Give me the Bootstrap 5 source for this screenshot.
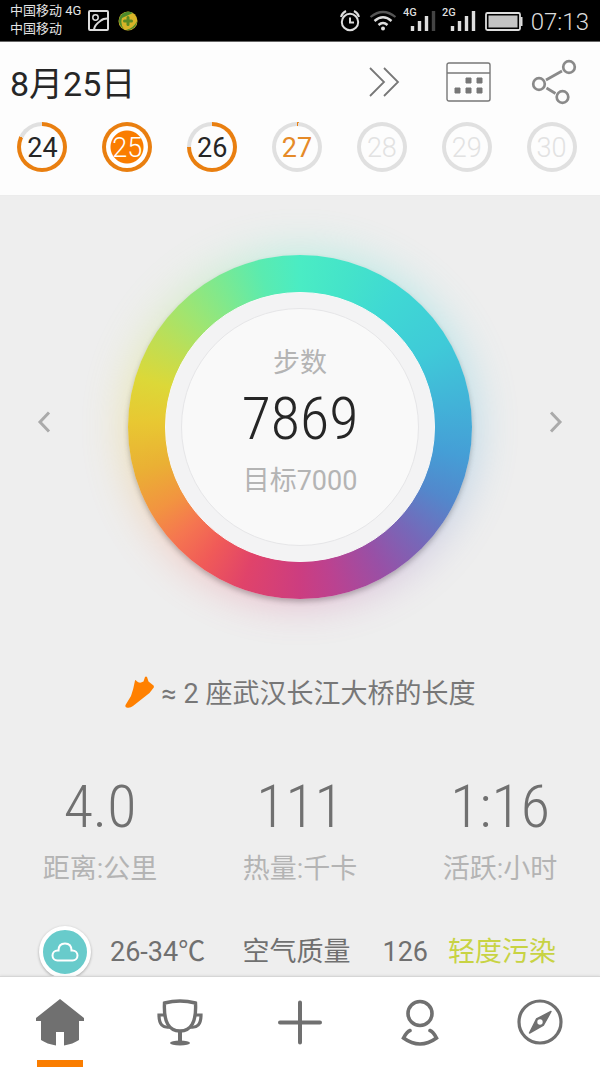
<!DOCTYPE html>
<html lang="zh-CN">
<head>
<meta charset="utf-8">
<meta name="viewport" content="width=device-width, initial-scale=1">
<title>8月25日 步数</title>
<link href="https://cdn.jsdelivr.net/npm/bootstrap@5.3.0/dist/css/bootstrap.min.css" rel="stylesheet">
<style>
  :root { --accent: #fa7d00; --ink: #262626; --soft: #707070; --pale: #b4b4b4; }
  body { font-family: Roboto, "Noto Sans CJK SC", sans-serif; font-size: 27px; line-height: 36px; background: #eee; color: var(--soft); }
  svg { display: block; flex: none; }
  .status-bar { background: #000; color: #e4e4e4; height: 42px; border-bottom: 1px solid #666; padding: 0 11px 0 10px; }
  .carrier { font-size: 13px; line-height: 18px; padding-bottom: 2px; margin-right: 7px; }
  .clock { font-size: 24px; font-weight: 300; color: #ddd; line-height: 40px; padding-top: 2px; }
  .day-header { background: #fdfdfd; padding-bottom: 23px; border-bottom: 1px solid #ececec; }
  .tool-row { padding-right: 4px; }
  .day-title { font-size: 34px; line-height: 40px; color: var(--ink); padding: 3px 0 0 10px; font-weight: 400; }
  .tool-btn { width: 85px; height: 80px; background: none; border: 0; padding: 0; }
  .day-strip { padding-right: 6px; }
  .day-link { flex: 1 1 0; display: flex; justify-content: center; text-decoration: none; }
  .day-ring { --fill: 0%; width: 50px; height: 50px; border-radius: 50%; display: grid; place-items: center; background: conic-gradient(#e97f10 var(--fill), #e0e0e0 0); color: var(--ink); }
  .day-face { width: 42px; height: 42px; border-radius: 50%; background: #fdfdfd; display: grid; place-items: center; padding-top: 2px; }
  .day-ring.chosen .day-face { background: radial-gradient(circle, var(--accent) 16px, #fff 17px); color: #fff; font-weight: 300; }
  .day-ring.today { color: #e58a28; }
  .day-ring.ahead { color: #e2e2e2; font-weight: 300; }
  .dial-row { padding: 59px 31px 0; }
  .arrow-btn { width: 26px; height: 40px; background: none; border: 0; padding: 0; display: grid; place-items: center; margin-bottom: 10px; }
  .dial { --spectrum: conic-gradient(#4aecc4, #44e3ca 18deg, #3fd8d4 36deg, #3fcad8 60deg, #42b2d8 82deg, #459ed6 100deg, #5288cc 116deg, #7767b8 134deg, #9850a6 150deg, #bb4290 168deg, #cc3d80 180deg, #e0436a 200deg, #f05a58 215deg, #f57650 228deg, #f29440 240deg, #eab034 255deg, #e8c832 272deg, #dcd838 287deg, #bede55 302deg, #9ee572 316deg, #7ae992 332deg, #5aebb0 346deg, #4aecc4); width: 344px; height: 344px; position: relative; border-radius: 50%; }
  .dial::before { content: ""; position: absolute; inset: -4px; border-radius: 50%; background: var(--spectrum); filter: blur(22px); opacity: .3; }
  .dial-band { position: relative; width: 100%; height: 100%; border-radius: 50%; background: var(--spectrum); padding: 37px; box-shadow: 0 3px 5px rgba(60,60,60,.3); }
  .dial-rim { width: 100%; height: 100%; border-radius: 50%; background: #f3f3f4; padding: 15px; border: 1px solid #f8f8f8; }
  .dial-face { width: 100%; height: 100%; border-radius: 50%; background: #f9f9f9; border: 1px solid #e6e6e8; color: var(--pale); display: flex; flex-direction: column; align-items: center; padding-top: 36px; }
  .tall-num { font-family: "Roboto Condensed", "Liberation Sans Narrow", Roboto, sans-serif; font-weight: 300; font-size: 60px; line-height: 76px; margin-bottom: 6px; }
  .step-count { color: var(--ink); }
  .tip { margin-top: 77px; gap: 8px; color: #777; }
  .stats { margin-top: 57px; }
  .stat-label { color: var(--pale); }
  .weather { padding: 39px 44px 0 39px; margin-bottom: -4px; }
  .weather-icon { width: 52px; height: 52px; border-radius: 50%; background: #68cbcb; border: 4px solid #fff; box-shadow: 0 1px 3px rgba(0,0,0,.3); display: grid; place-items: center; margin-right: 19px; }
  .air-level { color: #c8d343; }
  .tab-bar { background: #fff; border-top: 1px solid #d6d6d6; box-shadow: 0 -1px 2px rgba(0,0,0,.06); z-index: 2; }
  .tab-link { flex: 1 1 0; height: 90px; display: flex; flex-direction: column; align-items: center; justify-content: space-between; padding-top: 20px; }
  .tab-mark { width: 46px; height: 7px; }
  .tab-link.active .tab-mark { background: var(--accent); }
</style>
</head>
<body>
<div class="d-flex flex-column min-vh-100">
  <div class="status-bar d-flex align-items-center justify-content-between">
    <div class="d-flex align-items-center">
      <div class="carrier">中国移动 4G<br>中国移动</div>
      <svg width="21" height="21" viewBox="0 0 21 21" fill="none" stroke="#ddd" stroke-width="2"><rect x="1" y="1" width="19" height="19" rx="1"/><circle cx="7.500" cy="7.500" r="2.700" stroke-width="1.500"/><path d="M6 19.500c1-6 6-8 7-9s4-2 6.500-2"/></svg>
      <svg class="ms-2" width="22" height="22" viewBox="0 0 22 22"><circle cx="11" cy="11" r="9.500" fill="#d8b428"/><path d="M2 10A9.500 9.500 0 0 1 16 3L5 8Q3 14 7 19Q2 16 2 10ZM20 11A9.500 9.500 0 0 1 9 20Q17 18 20 11Z" fill="#4c8a2c"/><path d="M11 7.500v7M7.500 11h7" stroke="#5a8a24" stroke-width="3" stroke-linecap="round"/></svg>
    </div>
    <div class="d-flex align-items-center">
      <svg width="186" height="32" viewBox="338 5 186 32" fill="none" stroke="#ddd" stroke-width="2">
        <circle cx="351" cy="22" r="8.200"/><path d="M351 17.500V22.500H355M342 17q1-4 5-6M360 17q-1-4-5-6"/>
        <circle cx="384" cy="28.500" r="2" fill="#ddd" stroke="none"/><path d="M379.500 25q4.500-4 9 0M375.500 21q8.500-7.500 17 0" stroke-width="2.400"/><path d="M371.500 17q12.500-10 25 0" stroke="#555" stroke-width="2.200"/>
        <path d="M413.500 26v5M420.500 21v10M427.500 16v15M453.500 26v5M460.500 21v10M467.500 16v15M474.500 11v20" stroke-width="3.400"/><path d="M434.500 11v20" stroke="#444" stroke-width="3.400"/>
        <rect x="487" y="13" width="34" height="17" rx="1.500" stroke-width="1.800"/><rect x="489.500" y="15.500" width="29" height="12" fill="#c4c4c4" stroke="none"/><path d="M522.500 17v9"/>
        <g fill="#ddd" stroke="none" font-family="Roboto, sans-serif" font-size="11" font-weight="500"><text x="404" y="16">4G</text><text x="443" y="16">2G</text></g>
      </svg>
      <span class="clock ms-2">07:13</span>
    </div>
  </div>

  <header class="day-header">
    <div class="tool-row d-flex align-items-center">
      <h1 class="day-title flex-grow-1 mb-0">8月25日</h1>
      <button class="tool-btn" type="button" aria-label="更多"><svg class="mx-auto" width="32" height="32" viewBox="0 0 32 32" fill="none" stroke="#777" stroke-width="1.800"><path d="M2 2l14 14L2 30M16 2l14 14L16 30"/></svg></button>
      <button class="tool-btn" type="button" aria-label="日历"><svg class="mx-auto" width="45" height="40" viewBox="0 0 45 40" fill="none" stroke="#777" stroke-width="1.400"><rect x="1" y="1" width="43" height="38" rx="2"/><path d="M1 11h43"/><path d="M20 16h5v5h-5zM31 16h5v5h-5zM9 26h5v5H9zM20 26h5v5h-5zM31 26h5v5h-5z" fill="#777" stroke-width="1"/></svg></button>
      <button class="tool-btn" type="button" aria-label="分享"><svg class="mx-auto" width="46" height="46" viewBox="0 0 46 46" fill="none" stroke="#8a8a8a" stroke-width="2.700"><circle cx="38" cy="8" r="5.800"/><circle cx="8" cy="25" r="5.800"/><circle cx="31.500" cy="38" r="5.800"/><path d="M15 21l16-9M15.500 29l9 5.500"/></svg></button>
    </div>
    <nav class="day-strip d-flex" aria-label="日期">
      <a class="day-link" href="#"><span class="day-ring" style="--fill:82%"><span class="day-face">24</span></span></a>
      <a class="day-link" href="#" aria-current="date"><span class="day-ring chosen" style="--fill:100%"><span class="day-face">25</span></span></a>
      <a class="day-link" href="#"><span class="day-ring" style="--fill:75%"><span class="day-face">26</span></span></a>
      <a class="day-link" href="#"><span class="day-ring today" style="--fill:1%"><span class="day-face">27</span></span></a>
      <a class="day-link" href="#"><span class="day-ring ahead"><span class="day-face">28</span></span></a>
      <a class="day-link" href="#"><span class="day-ring ahead"><span class="day-face">29</span></span></a>
      <a class="day-link" href="#"><span class="day-ring ahead"><span class="day-face">30</span></span></a>
    </nav>
  </header>

  <main class="flex-grow-1">
    <div class="dial-row d-flex align-items-center justify-content-between">
      <button class="arrow-btn" type="button" aria-label="前一天"><svg width="14" height="22" viewBox="0 0 14 22" fill="none" stroke="#aaa" stroke-width="3"><path d="M12 1.500L3 11l9 9.500"/></svg></button>
      <div class="dial">
        <div class="dial-band"><div class="dial-rim"><div class="dial-face">
          <div>步数</div>
          <div class="tall-num step-count">7869</div>
          <div>目标7000</div>
        </div></div></div>
      </div>
      <button class="arrow-btn" type="button" aria-label="后一天"><svg width="14" height="22" viewBox="0 0 14 22" fill="none" stroke="#aaa" stroke-width="3"><path d="M2 1.500l9 9.500-9 9.500"/></svg></button>
    </div>

    <div class="tip d-flex justify-content-center">
      <svg width="29" height="32" viewBox="0 0 29 32" fill="#ff8000"><path d="M10 4.500Q10.500 3.500 11.500 5 14.500 8 18.500 5.500L20 1Q21 0 22 1L23.500 5.500 28.500 9.500Q29.500 11 28 12.500L24.500 17 8 30Q5 32.500 1.500 31.500 0 31 .5 29L6 20Q8.500 13 10 4.500Z"/></svg>
      <span>≈ 2 座武汉长江大桥的长度</span>
    </div>

    <div class="stats row g-0 text-center">
      <div class="col"><div class="tall-num">4.0</div><div class="stat-label">距离:公里</div></div>
      <div class="col"><div class="tall-num">111</div><div class="stat-label">热量:千卡</div></div>
      <div class="col"><div class="tall-num">1:16</div><div class="stat-label">活跃:小时</div></div>
    </div>

    <div class="weather d-flex align-items-center">
      <span class="weather-icon"><svg width="28" height="20" viewBox="0 0 28 20" fill="none" stroke="#fff" stroke-width="2"><path d="M6.500 18.500h15a5 5 0 0 0 0-10h-1q0-7-6.500-7t-6.500 7h-1a5 5 0 0 0 0 10Z"/></svg></span>
      <span class="flex-grow-1">26-34℃</span>
      <span class="me-4 pe-2">空气质量</span>
      <span class="me-3 pe-1">126</span>
      <span class="air-level">轻度污染</span>
    </div>
  </main>

  <nav class="tab-bar sticky-bottom d-flex" aria-label="主导航">
    <a class="tab-link active" href="#" aria-label="首页"><svg width="50" height="50" viewBox="0 0 50 50" fill="#707070"><path d="M25 2L49 21v3h-5v19q-6 4-15 5.500V35h-8v13.500Q12 47 6 43V24H1v-3Z"/></svg><span class="tab-mark"></span></a>
    <a class="tab-link" href="#" aria-label="奖杯"><svg width="50" height="50" viewBox="0 0 50 50" fill="none" stroke="#707070" stroke-width="3.400"><path d="M9.500 6q15.500-4 31 0Q42 34 25 34T9.500 6Z"/><path d="M10 18H4q0 14 11 12M40 18h6q0 14-11 12" stroke-width="3.200"/><path d="M25 34v12" stroke-width="4"/><ellipse cx="25" cy="46" rx="10" ry="2.600" fill="#707070" stroke="none"/></svg><span class="tab-mark"></span></a>
    <a class="tab-link" href="#" aria-label="添加"><svg width="50" height="50" viewBox="0 0 50 50" stroke="#707070" stroke-width="4" stroke-linecap="round"><path d="M25 5.500v40M5 25.500h40"/></svg><span class="tab-mark"></span></a>
    <a class="tab-link" href="#" aria-label="我的"><svg width="50" height="50" viewBox="0 0 50 50" fill="none" stroke="#707070" stroke-width="3.600"><circle cx="25" cy="16.500" r="12"/><path d="M15 33.500q-3 1-6.500 7.500 16.500 12 33 0-3.500-6.500-6.500-7.500" stroke-linecap="round"/></svg><span class="tab-mark"></span></a>
    <a class="tab-link" href="#" aria-label="发现"><svg width="50" height="50" viewBox="0 0 50 50"><circle cx="25" cy="25" r="21" fill="none" stroke="#707070" stroke-width="3.200"/><path d="M36 14.500L28.500 28 14.500 36 21.500 22Z" fill="#707070" stroke="#707070" stroke-width="1.500" stroke-linejoin="round"/><circle cx="25" cy="25" r="2.700" fill="#fff"/></svg><span class="tab-mark"></span></a>
  </nav>
</div>
<script src="https://cdn.jsdelivr.net/npm/bootstrap@5.3.0/dist/js/bootstrap.bundle.min.js"></script>
</body>
</html>
